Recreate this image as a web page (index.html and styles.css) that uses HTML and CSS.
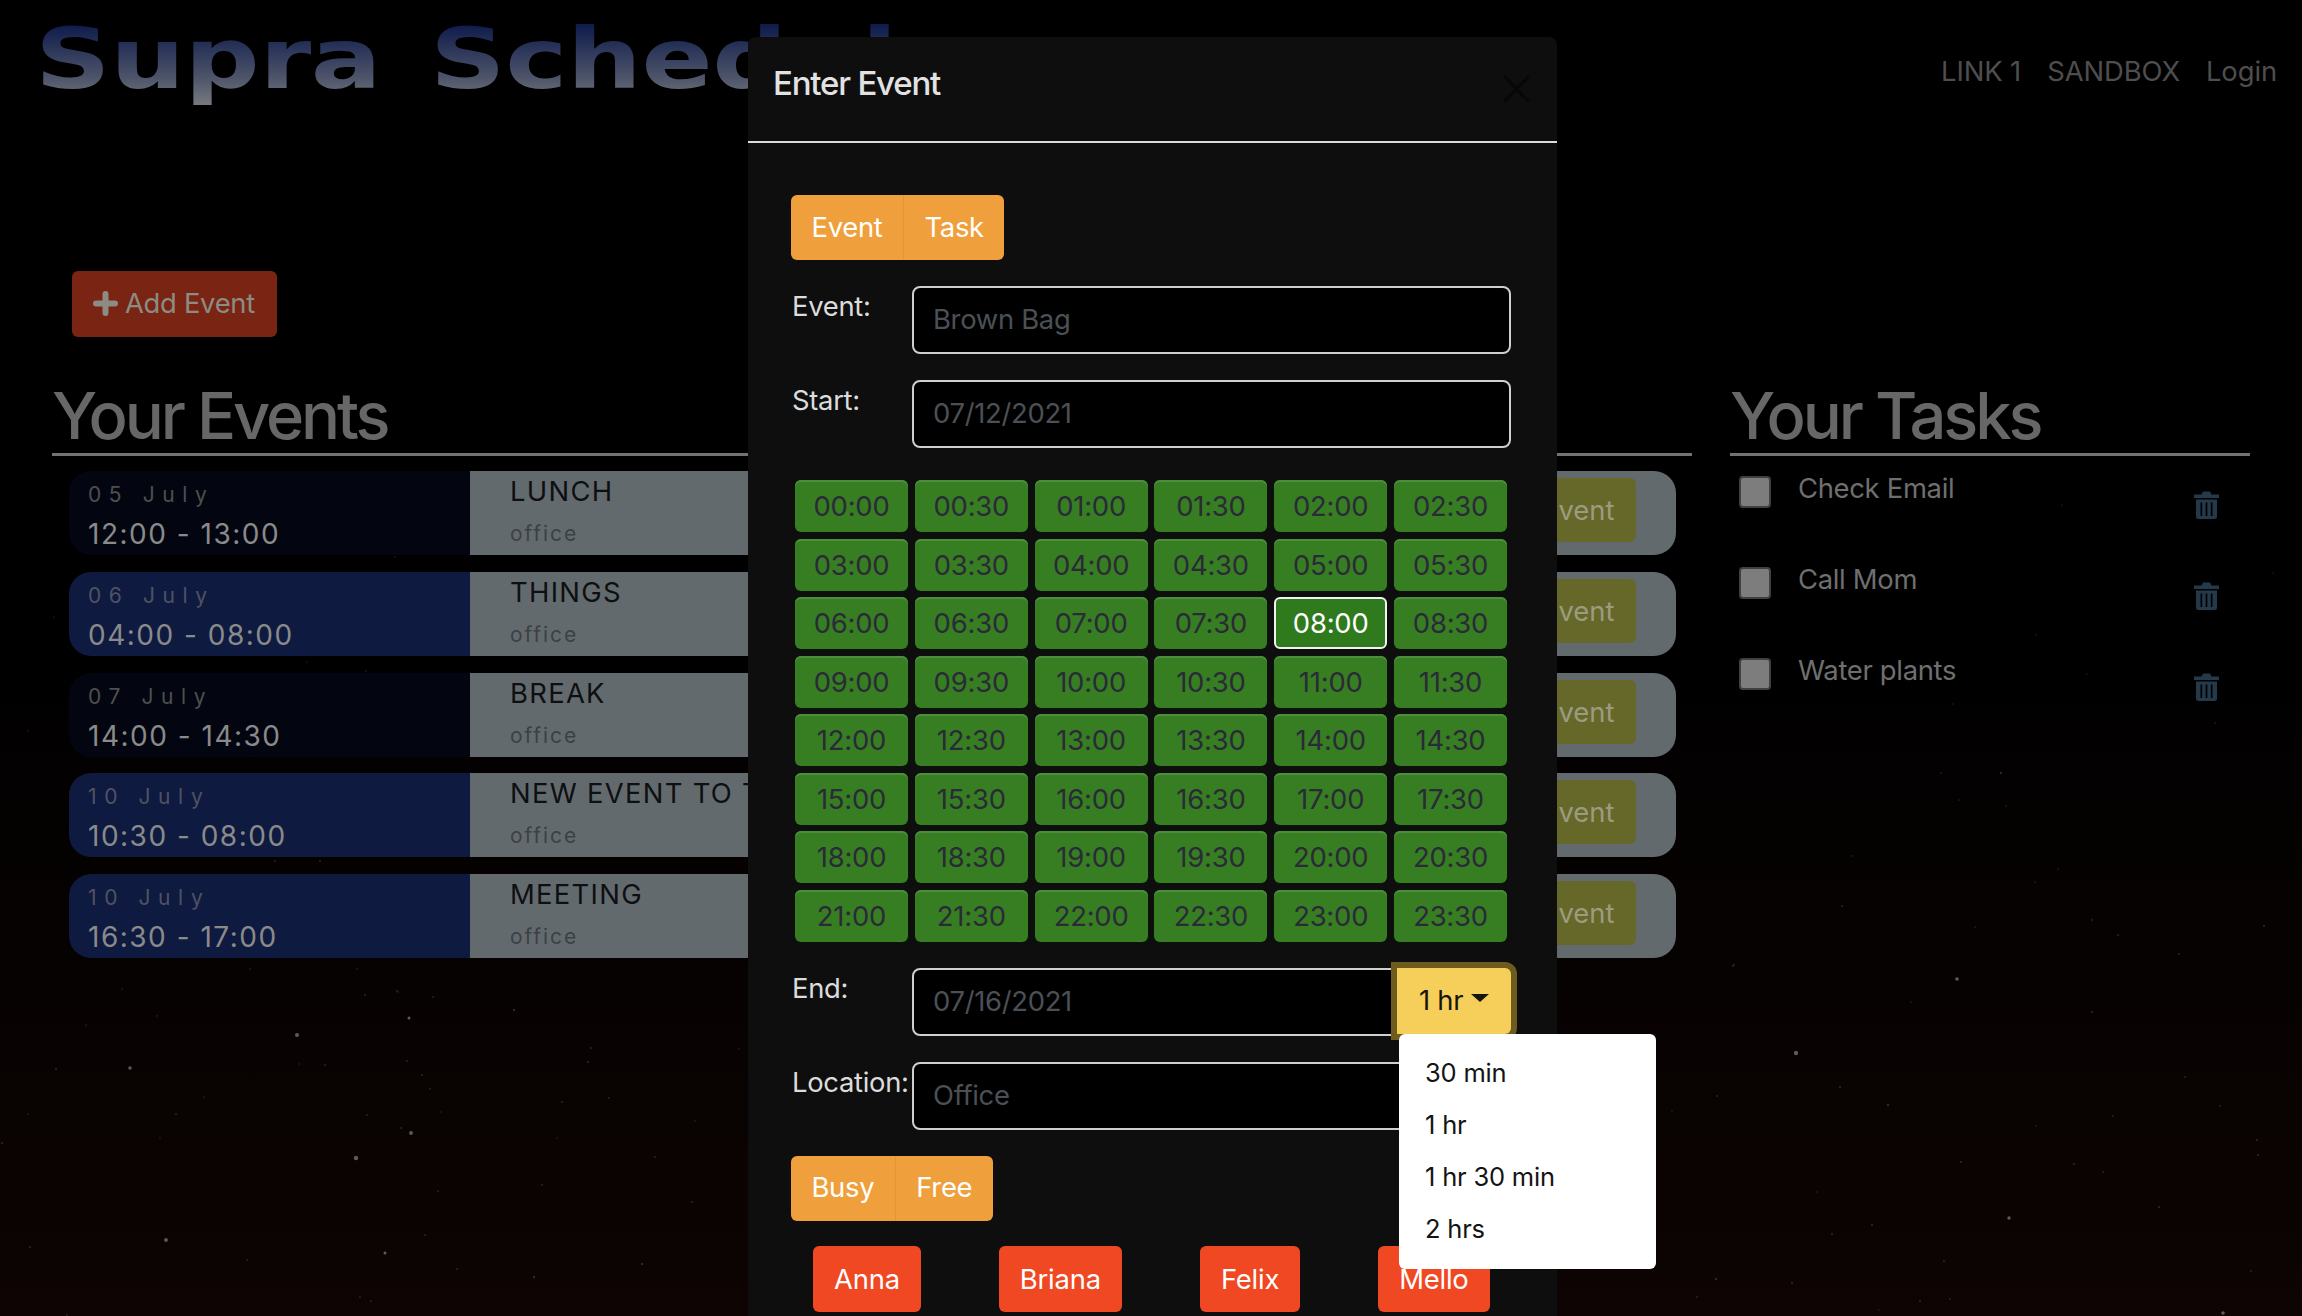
FILE: index.html
```html
<!DOCTYPE html>
<html lang="en">
<head>
<meta charset="utf-8">
<title>Supra Schedule</title>
<link rel="stylesheet" href="styles.css">
</head>
<body>
<svg class="stars" width="2302" height="1316" viewBox="0 0 2302 1316" aria-hidden="true">
  <g class="star-big">
    <circle cx="297" cy="1035" r="2"/><circle cx="130" cy="1068" r="1.7"/><circle cx="411" cy="1133" r="1.9"/><circle cx="356" cy="1158" r="2.2"/><circle cx="166" cy="1240" r="1.9"/><circle cx="385" cy="1253" r="1.5"/><circle cx="409" cy="1018" r="1.5"/><circle cx="1796" cy="1053" r="2.2"/><circle cx="1957" cy="979" r="1.8"/><circle cx="2009" cy="1218" r="1.7"/><circle cx="2223" cy="1313" r="1.8"/>
  </g>
  <g class="star-small">
    <circle cx="2001" cy="773" r="1.2"/><circle cx="514" cy="1010" r="1.2"/><circle cx="591" cy="1048" r="1"/><circle cx="588" cy="1062" r="1.1"/><circle cx="562" cy="1102" r="1"/><circle cx="609" cy="1098" r="0.9"/><circle cx="655" cy="1157" r="0.9"/><circle cx="692" cy="1202" r="1"/><circle cx="642" cy="1264" r="1.2"/><circle cx="534" cy="1277" r="1.2"/><circle cx="425" cy="1235" r="1"/><circle cx="30" cy="1247" r="1"/><circle cx="247" cy="1260" r="0.9"/><circle cx="2" cy="1143" r="1"/><circle cx="56" cy="1069" r="1.1"/><circle cx="397" cy="991" r="1"/><circle cx="365" cy="995" r="0.9"/><circle cx="433" cy="997" r="0.9"/><circle cx="407" cy="1061" r="0.9"/><circle cx="422" cy="1075" r="0.9"/><circle cx="430" cy="1089" r="0.9"/><circle cx="367" cy="1115" r="0.9"/><circle cx="401" cy="1128" r="0.9"/><circle cx="441" cy="1112" r="0.8"/><circle cx="176" cy="1114" r="0.9"/><circle cx="160" cy="1138" r="0.8"/><circle cx="204" cy="1097" r="0.8"/><circle cx="325" cy="1065" r="0.9"/><circle cx="299" cy="1064" r="0.8"/><circle cx="86" cy="1025" r="0.8"/><circle cx="157" cy="1016" r="0.8"/><circle cx="542" cy="1185" r="0.9"/><circle cx="457" cy="1269" r="0.9"/><circle cx="360" cy="1297" r="0.9"/><circle cx="371" cy="1301" r="0.9"/><circle cx="67" cy="1315" r="0.9"/><circle cx="28" cy="1114" r="0.8"/><circle cx="438" cy="1191" r="0.9"/><circle cx="557" cy="1138" r="0.8"/><circle cx="695" cy="1121" r="0.8"/><circle cx="739" cy="1049" r="0.8"/>
    <circle cx="2264" cy="926" r="1.1"/><circle cx="2118" cy="935" r="0.9"/><circle cx="2092" cy="920" r="0.9"/><circle cx="1842" cy="906" r="1"/><circle cx="1733" cy="966" r="0.9"/><circle cx="2058" cy="869" r="0.8"/><circle cx="1852" cy="856" r="0.8"/><circle cx="1975" cy="927" r="0.8"/><circle cx="2179" cy="954" r="0.9"/><circle cx="2215" cy="723" r="0.8"/><circle cx="2273" cy="573" r="0.7"/><circle cx="2062" cy="505" r="0.7"/><circle cx="2036" cy="635" r="0.7"/><circle cx="2087" cy="674" r="0.7"/><circle cx="1953" cy="704" r="0.7"/><circle cx="1941" cy="773" r="0.8"/><circle cx="1959" cy="800" r="0.8"/><circle cx="2006" cy="806" r="0.8"/><circle cx="2035" cy="882" r="0.8"/>
    <circle cx="275" cy="861" r="0.9"/><circle cx="320" cy="861" r="0.9"/><circle cx="366" cy="671" r="0.8"/><circle cx="307" cy="662" r="0.7"/><circle cx="395" cy="557" r="0.7"/><circle cx="54" cy="617" r="0.7"/><circle cx="28" cy="731" r="0.7"/><circle cx="250" cy="969" r="0.8"/><circle cx="357" cy="969" r="0.8"/><circle cx="398" cy="992" r="0.8"/><circle cx="122" cy="989" r="0.8"/>
    <circle cx="1888" cy="1105" r="1.2"/><circle cx="2092" cy="1012" r="1"/><circle cx="2185" cy="1077" r="0.9"/><circle cx="2220" cy="1106" r="0.9"/><circle cx="2113" cy="1116" r="0.9"/><circle cx="2036" cy="1126" r="0.8"/><circle cx="2257" cy="1140" r="1"/><circle cx="2258" cy="1155" r="1"/><circle cx="1961" cy="1162" r="1"/><circle cx="2074" cy="1164" r="1"/><circle cx="2103" cy="1172" r="0.9"/><circle cx="2159" cy="1207" r="1.1"/><circle cx="1872" cy="1225" r="1.1"/><circle cx="1832" cy="1234" r="1"/><circle cx="1944" cy="1261" r="0.9"/><circle cx="2251" cy="1271" r="0.9"/><circle cx="1716" cy="1279" r="1.2"/><circle cx="1792" cy="1283" r="1.1"/><circle cx="1697" cy="1297" r="0.9"/><circle cx="1920" cy="1301" r="1"/><circle cx="1950" cy="1299" r="0.9"/><circle cx="1879" cy="1310" r="0.8"/><circle cx="1840" cy="1087" r="1"/><circle cx="1717" cy="1096" r="0.9"/><circle cx="1672" cy="1111" r="0.8"/><circle cx="1817" cy="1192" r="0.8"/><circle cx="1734" cy="965" r="0.9"/><circle cx="1911" cy="1002" r="0.8"/>
  </g>
</svg>

<div class="page">
  <header class="topbar">
    <h1 class="brand"><span class="brand-text">Supra Schedule</span></h1>
    <nav class="nav">
      <a class="nav-link">LINK 1</a>
      <a class="nav-link">SANDBOX</a>
      <a class="nav-link">Login</a>
    </nav>
  </header>

  <button class="add-btn" type="button">
    <svg class="plus" viewBox="0 0 25 25" aria-hidden="true"><path d="M12.5 3v19M3 12.500h19"/></svg>
    <span>Add Event</span>
  </button>

  <main class="columns">
    <section class="events">
      <h2 class="heading">Your Events</h2>
      <article class="event event-dark">
        <div class="event-when"><div class="event-date">05 July</div><div class="event-time">12:00 - 13:00</div></div>
        <div class="event-what"><div class="event-info"><div class="event-name">LUNCH</div><div class="event-place">office</div></div><button class="event-btn" type="button">Event</button></div>
      </article>
      <article class="event event-blue">
        <div class="event-when"><div class="event-date">06 July</div><div class="event-time">04:00 - 08:00</div></div>
        <div class="event-what"><div class="event-info"><div class="event-name">THINGS</div><div class="event-place">office</div></div><button class="event-btn" type="button">Event</button></div>
      </article>
      <article class="event event-dark">
        <div class="event-when"><div class="event-date">07 July</div><div class="event-time">14:00 - 14:30</div></div>
        <div class="event-what"><div class="event-info"><div class="event-name">BREAK</div><div class="event-place">office</div></div><button class="event-btn" type="button">Event</button></div>
      </article>
      <article class="event event-blue">
        <div class="event-when"><div class="event-date">10 July</div><div class="event-time">10:30 - 08:00</div></div>
        <div class="event-what"><div class="event-info"><div class="event-name">NEW EVENT TO TEST</div><div class="event-place">office</div></div><button class="event-btn" type="button">Event</button></div>
      </article>
      <article class="event event-blue">
        <div class="event-when"><div class="event-date">10 July</div><div class="event-time">16:30 - 17:00</div></div>
        <div class="event-what"><div class="event-info"><div class="event-name">MEETING</div><div class="event-place">office</div></div><button class="event-btn" type="button">Event</button></div>
      </article>
    </section>

    <section class="tasks">
      <h2 class="heading">Your Tasks</h2>
      <div class="task">
        <span class="check"></span><span class="task-name">Check Email</span>
        <svg class="trash" viewBox="0 0 25 28" aria-hidden="true"><path fill-rule="evenodd" d="M0 3.500h7.500L9 .5h7l1.500 3H25v3.500H0zM2 8.500h21v17a2.500 2.500 0 0 1-2.500 2.500h-16A2.500 2.500 0 0 1 2 25.500zM6.500 11.500v13.500h1.700V11.500zM11.650 11.500v13.500h1.700V11.500zM16.800 11.500v13.500h1.700V11.500z"/></svg>
      </div>
      <div class="task">
        <span class="check"></span><span class="task-name">Call Mom</span>
        <svg class="trash" viewBox="0 0 25 28" aria-hidden="true"><path fill-rule="evenodd" d="M0 3.500h7.500L9 .5h7l1.500 3H25v3.500H0zM2 8.500h21v17a2.500 2.500 0 0 1-2.500 2.500h-16A2.500 2.500 0 0 1 2 25.500zM6.500 11.500v13.500h1.700V11.500zM11.650 11.500v13.500h1.700V11.500zM16.800 11.500v13.500h1.700V11.500z"/></svg>
      </div>
      <div class="task">
        <span class="check"></span><span class="task-name">Water plants</span>
        <svg class="trash" viewBox="0 0 25 28" aria-hidden="true"><path fill-rule="evenodd" d="M0 3.500h7.500L9 .5h7l1.500 3H25v3.500H0zM2 8.500h21v17a2.500 2.500 0 0 1-2.500 2.500h-16A2.500 2.500 0 0 1 2 25.500zM6.500 11.500v13.500h1.700V11.500zM11.650 11.500v13.500h1.700V11.500zM16.800 11.500v13.500h1.700V11.500z"/></svg>
      </div>
    </section>
  </main>
</div>

<div class="modal">
  <div class="modal-head">
    <div class="modal-title">Enter Event</div>
    <svg class="modal-close" viewBox="0 0 29 28" aria-hidden="true"><path d="M2 1l25 26M27 1L2 27"/></svg>
  </div>
  <div class="modal-body">
    <div class="toggle">
      <button class="toggle-btn" type="button">Event</button>
      <button class="toggle-btn" type="button">Task</button>
    </div>
    <div class="field">
      <label class="field-label">Event:</label>
      <div class="field-input">Brown Bag</div>
    </div>
    <div class="field">
      <label class="field-label">Start:</label>
      <div class="field-input">07/12/2021</div>
    </div>
    <div class="times">
      <button class="time" type="button">00:00</button><button class="time" type="button">00:30</button><button class="time" type="button">01:00</button><button class="time" type="button">01:30</button><button class="time" type="button">02:00</button><button class="time" type="button">02:30</button>
      <button class="time" type="button">03:00</button><button class="time" type="button">03:30</button><button class="time" type="button">04:00</button><button class="time" type="button">04:30</button><button class="time" type="button">05:00</button><button class="time" type="button">05:30</button>
      <button class="time" type="button">06:00</button><button class="time" type="button">06:30</button><button class="time" type="button">07:00</button><button class="time" type="button">07:30</button><button class="time time-on" type="button">08:00</button><button class="time" type="button">08:30</button>
      <button class="time" type="button">09:00</button><button class="time" type="button">09:30</button><button class="time" type="button">10:00</button><button class="time" type="button">10:30</button><button class="time" type="button">11:00</button><button class="time" type="button">11:30</button>
      <button class="time" type="button">12:00</button><button class="time" type="button">12:30</button><button class="time" type="button">13:00</button><button class="time" type="button">13:30</button><button class="time" type="button">14:00</button><button class="time" type="button">14:30</button>
      <button class="time" type="button">15:00</button><button class="time" type="button">15:30</button><button class="time" type="button">16:00</button><button class="time" type="button">16:30</button><button class="time" type="button">17:00</button><button class="time" type="button">17:30</button>
      <button class="time" type="button">18:00</button><button class="time" type="button">18:30</button><button class="time" type="button">19:00</button><button class="time" type="button">19:30</button><button class="time" type="button">20:00</button><button class="time" type="button">20:30</button>
      <button class="time" type="button">21:00</button><button class="time" type="button">21:30</button><button class="time" type="button">22:00</button><button class="time" type="button">22:30</button><button class="time" type="button">23:00</button><button class="time" type="button">23:30</button>
    </div>
    <div class="field field-end">
      <label class="field-label">End:</label>
      <div class="field-input field-input-joined">07/16/2021</div>
      <div class="dropdown">
        <button class="dropdown-btn" type="button">1 hr<span class="caret"></span></button>
        <ul class="dropdown-menu">
          <li class="dropdown-item">30 min</li>
          <li class="dropdown-item">1 hr</li>
          <li class="dropdown-item">1 hr 30 min</li>
          <li class="dropdown-item">2 hrs</li>
        </ul>
      </div>
    </div>
    <div class="field">
      <label class="field-label">Location:</label>
      <div class="field-input">Office</div>
    </div>
    <div class="toggle toggle-busy">
      <button class="toggle-btn" type="button">Busy</button>
      <button class="toggle-btn" type="button">Free</button>
    </div>
    <div class="people">
      <button class="person" type="button">Anna</button>
      <button class="person" type="button">Briana</button>
      <button class="person" type="button">Felix</button>
      <button class="person" type="button">Mello</button>
    </div>
  </div>
</div>
</body>
</html>
```

FILE: styles.css
```css
* { box-sizing: border-box; }

html, body {
  margin: 0;
  height: 1316px;
  overflow: hidden;
}

body {
  position: relative;
  background: linear-gradient(180deg, #000 0, #000 620px, #0d0403 1316px);
  font-family: Inter, "Noto Sans", sans-serif;
  font-size: 27.4px;
  color: #888;
}

button { font-family: inherit; font-size: inherit; border: 0; padding: 0; margin: 0; }

.stars { position: absolute; left: 0; top: 0; }
.star-big { fill: #5e5a61; }
.star-small { fill: #2b292c; }

.page { position: relative; width: 2302px; }

/* top bar */
.topbar {
  display: flex;
  justify-content: space-between;
  align-items: flex-start;
  height: 271px;
  padding: 0 25px 0 35px;
}

.brand { margin: 0; padding-top: 7px; white-space: nowrap; line-height: 1; }

.brand-text {
  display: inline-block;
  font-family: "DejaVu Sans", sans-serif;
  font-weight: 700;
  font-size: 84px;
  line-height: 104px;
  letter-spacing: -0.3px;
  word-spacing: 10px;
  transform: scaleX(1.25);
  transform-origin: left top;
  background: linear-gradient(180deg, #000 0, #0f1c4c 18px, #4a5168 68px, #767a7e 98px);
  -webkit-background-clip: text;
  background-clip: text;
  color: transparent;
}

.nav { display: flex; gap: 26px; padding-top: 52px; }
.nav-link { color: #4e4e4e; line-height: 38px; letter-spacing: -0.1px; }

/* add button */
.add-btn {
  display: flex;
  align-items: center;
  gap: 7px;
  height: 66px;
  width: 205px;
  margin-left: 72px;
  padding: 0 0 2px 21px;
  background: #7a2413;
  color: #8c8c84;
  border-radius: 6px;
  letter-spacing: -0.3px;
}
.plus { width: 25px; height: 25px; fill: none; stroke: #8c8c84; stroke-width: 6; stroke-linecap: round; }

/* columns */
.columns {
  display: grid;
  grid-template-columns: 1640px 520px;
  column-gap: 38px;
  margin: 35px 0 0 52px;
}

.heading {
  margin: 0;
  height: 84px;
  border-bottom: 3px solid #727272;
  color: #676767;
  font-size: 65px;
  font-weight: 500;
  line-height: 87px;
  letter-spacing: -3.1px;
}

/* events */
.events { display: flex; flex-direction: column; }

.event {
  display: flex;
  height: 84px;
  margin: 16.75px 16px 0 17px;
  border-radius: 22px;
  overflow: hidden;
}
.event:first-of-type { margin-top: 15px; }

.event-when {
  flex: 0 0 401px;
  padding: 9px 0 0 19px;
}
.event-dark .event-when { background: #030610; }
.event-blue .event-when { background: #0f1a40; }

.event-date {
  height: 34px;
  color: #4f4f4f;
  font-size: 21px;
  line-height: 30px;
  letter-spacing: 7.6px;
}
.event-blue .event-date { color: #4f5262; }

.event-time {
  color: #8a8a8a;
  font-size: 28px;
  line-height: 40px;
  letter-spacing: 1.5px;
}

.event-what {
  flex: 1;
  display: flex;
  justify-content: space-between;
  align-items: flex-start;
  padding: 0 40px 0 40px;
  background: #636a6e;
}

.event-info { padding-top: 2px; }

.event-name {
  color: #0d0f11;
  font-size: 27.4px;
  line-height: 36px;
  letter-spacing: 1.3px;
  white-space: nowrap;
}

.event-place {
  margin-top: 8px;
  color: #3c4144;
  font-size: 21px;
  line-height: 34px;
  letter-spacing: 1.9px;
}

.event-btn {
  width: 170px;
  height: 64px;
  margin-top: 7px;
  padding-left: 76px;
  text-align: left;
  background: #66682a;
  color: #9b9c7f;
  border-radius: 6px;
}

/* tasks */
.task {
  display: flex;
  align-items: flex-start;
  height: 91px;
  padding-left: 9px;
}
.task:first-of-type { margin-top: 19.5px; }

.check {
  flex: 0 0 32px;
  height: 32px;
  background: #7d7d7d;
  border: 2px solid #404040;
  border-radius: 4px;
}

.task-name {
  flex: 1;
  margin-left: 27px;
  color: #6f6f6f;
  line-height: 24px;
  letter-spacing: -0.3px;
}

.trash { flex: 0 0 25px; width: 25px; height: 28px; margin: 15px 31px 0 0; fill: #24394a; }

/* modal */
.modal {
  position: absolute;
  left: 748px;
  top: 37px;
  width: 809px;
  height: 1279px;
  background: #0e0e0e;
  border-radius: 8px 8px 0 0;
}

.modal-head {
  display: flex;
  justify-content: space-between;
  align-items: flex-start;
  height: 106px;
  padding: 26px 26px 0 25px;
  border-bottom: 2px solid #dcdcdc;
}

.modal-title {
  color: #e2e2e2;
  font-size: 33px;
  font-weight: 500;
  line-height: 40px;
  letter-spacing: -1.2px;
}

.modal-close { width: 29px; height: 28px; margin-top: 12px; fill: none; stroke: #070707; stroke-width: 3; }

.modal-body { padding: 52px 46px 0 43px; }

.toggle { display: flex; width: max-content; border-radius: 6px; overflow: hidden; }

.toggle-btn {
  height: 65px;
  padding: 0 20.5px 2px;
  background: #ef9f3b;
  color: #fff;
  letter-spacing: -0.3px;
}
.toggle-btn + .toggle-btn { border-left: 1px solid #e3953a; }

.field { display: flex; height: 68px; margin-top: 26px; }

.field-label {
  flex: 0 0 121px;
  padding: 0 0 0 1px;
  color: #dcdcdc;
  line-height: 40px;
  letter-spacing: -0.3px;
}

.field-input {
  flex: 1;
  height: 68px;
  padding-left: 19px;
  background: #000;
  border: 2px solid #cfcfcf;
  border-radius: 8px;
  color: #4b5056;
  line-height: 63px;
  letter-spacing: -0.3px;
}
.field-input-joined { border-radius: 8px 0 0 8px; }

.times {
  display: grid;
  grid-template-columns: repeat(6, 113px);
  grid-auto-rows: 52px;
  column-gap: 6.8px;
  row-gap: 6.5px;
  margin: 32px 0 0 4px;
}

.time {
  background: #377d22;
  color: #2a2a38;
  border-radius: 6px;
  box-shadow: inset 0 2px 0 #4d8d3c, 0 0 0 1px #0a150a;
  letter-spacing: -0.2px;
}

.time-on {
  background: #2f7a1c;
  color: #fff;
  border: 2px solid #f2f2f2;
  box-shadow: none;
}

.field-end { position: relative; z-index: 2; }

.dropdown { position: relative; flex: 0 0 114px; height: 66px; }

.dropdown-btn {
  display: flex;
  align-items: center;
  width: 114px;
  height: 66px;
  padding: 0 0 2px 22px;
  background: #f6cf5a;
  color: #15150f;
  border-radius: 0 6px 6px 0;
  box-shadow: 0 0 0 6px #6e5c1f;
  letter-spacing: -0.3px;
}

.caret {
  width: 0;
  height: 0;
  margin: -4px 0 0 8px;
  border-top: 8px solid #15150f;
  border-left: 9px solid transparent;
  border-right: 9px solid transparent;
}

.dropdown-menu {
  position: absolute;
  left: 2px;
  top: 66px;
  width: 257px;
  height: 235px;
  margin: 0;
  padding: 13px 0;
  list-style: none;
  background: #fff;
  border-radius: 6px;
}

.dropdown-item {
  height: 52px;
  padding-left: 26px;
  color: #141414;
  font-size: 25.5px;
  line-height: 52px;
  letter-spacing: -0.2px;
}

.toggle-busy { margin-top: 26px; }

.people { display: flex; gap: 78px; margin: 25px 0 0 22px; }

.person {
  height: 66px;
  padding: 0 21px;
  background: #ef4823;
  color: #fff;
  border-radius: 6px;
  letter-spacing: -0.2px;
}
```
